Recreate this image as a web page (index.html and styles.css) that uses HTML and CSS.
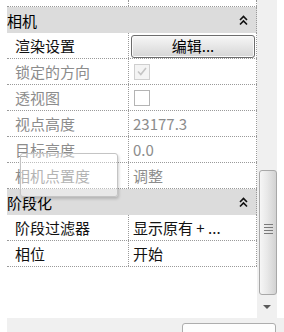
FILE: index.html
```html
<!DOCTYPE html>
<html lang="zh-CN">
<head>
    <link rel="stylesheet" href="styles.css">
</head>
<body>
    <div class="panel">
        <div class="main">
            <div class="grid">
                <div class="row stub">
                    <div class="name"></div>
                    <div class="value"></div>
                </div>

                <div class="group">
                    <span>相机</span>
                    <svg class="collapse" width="9" height="11" viewBox="0 0 9 11">
                        <path d="M1 5 L4.5 1.5 L8 5 M1 9.5 L4.5 6 L8 9.5" fill="none" stroke="#111" stroke-width="1.6"/>
                    </svg>
                </div>
                <div class="row">
                    <div class="name">渲染设置</div>
                    <div class="value"><button class="edit-btn">编辑...</button></div>
                </div>
                <div class="row muted">
                    <div class="name">锁定的方向</div>
                    <div class="value"><span class="check disabled">
                        <svg width="10" height="9" viewBox="0 0 10 9"><path d="M1 4.5 L3.8 7.5 L9 1" fill="none" stroke="#c4c4c4" stroke-width="1.6"/></svg>
                    </span></div>
                </div>
                <div class="row muted">
                    <div class="name">透视图</div>
                    <div class="value"><span class="check"></span></div>
                </div>
                <div class="row muted">
                    <div class="name">视点高度</div>
                    <div class="value">23177.3</div>
                </div>
                <div class="row muted">
                    <div class="name">目标高度</div>
                    <div class="value">0.0</div>
                </div>
                <div class="row muted">
                    <div class="name">相机点置度</div>
                    <div class="value">调整</div>
                </div>

                <div class="group">
                    <span>阶段化</span>
                    <svg class="collapse" width="9" height="11" viewBox="0 0 9 11">
                        <path d="M1 5 L4.5 1.5 L8 5 M1 9.5 L4.5 6 L8 9.5" fill="none" stroke="#111" stroke-width="1.6"/>
                    </svg>
                </div>
                <div class="row">
                    <div class="name">阶段过滤器</div>
                    <div class="value">显示原有 + ...</div>
                </div>
                <div class="row">
                    <div class="name">相位</div>
                    <div class="value">开始</div>
                </div>
            </div>

            <div class="scrollbar">
                <div class="track">
                    <div class="thumb"><span class="grip"></span></div>
                </div>
                <div class="arrow-down"></div>
            </div>
        </div>

        <div class="footer">
            <div class="footer-btn"></div>
        </div>

        <!-- drag ghost over the camera rows -->
        <div class="ghost"></div>
    </div>
</body>
</html>
```

FILE: styles.css
```css
body {
    margin: 0;
    background-color: white;
    font-family: "Noto Sans CJK SC", "Noto Sans", sans-serif;
    font-size: 15px;
    color: #111;
}

.panel {
    position: relative;
    width: 284px;
    height: 332px;
    overflow: hidden;
    background-color: white;
}

.main {
    display: flex;
    height: 318px;
}

.grid {
    width: 250px;
    padding-left: 7px;
}

.row {
    display: flex;
    height: 26px;
    box-sizing: border-box;
    border-bottom: 1px dotted #9a9a9a;
}

.row.stub {
    height: 7px;
}

.name {
    width: 121px;
    padding-left: 8px;
    box-sizing: border-box;
    display: flex;
    align-items: center;
    white-space: nowrap;
}

.value {
    flex: 1;
    display: flex;
    align-items: center;
    padding-left: 4px;
    border-left: 1px dotted #9a9a9a;
    border-right: 1px dotted #9a9a9a;
    white-space: nowrap;
}

.row.muted .name,
.row.muted .value {
    color: #8c8c8c;
}

.group {
    display: flex;
    justify-content: space-between;
    align-items: center;
    height: 26px;
    margin-top: 1px;
    padding-right: 8px;
    background-color: #dcdcdc;
    border-right: 1px dotted #9a9a9a;
    color: #000;
}

.group + .row {
    height: 26px;
}

.row + .group {
    margin-top: 0;
}

.collapse {
    display: block;
}

.edit-btn {
    width: 124px;
    height: 23px;
    margin: 1px 0 0 -2px;
    padding: 0;
    font-family: inherit;
    font-size: 15px;
    color: #000;
    border: 1px solid #6c6c6c;
    border-radius: 3px;
    background: linear-gradient(#f7f7f7, #e6e6e6 50%, #d6d6d6);
    box-shadow: inset 0 0 0 1px #fafafa;
    line-height: 20px;
}

.check {
    display: flex;
    align-items: center;
    justify-content: center;
    width: 14px;
    height: 14px;
    border: 1px solid #b4b4b4;
    background-color: white;
    margin-left: 1px;
}

.check.disabled {
    border-color: #cfcfcf;
    background-color: #f4f4f4;
}

.scrollbar {
    width: 20px;
    display: flex;
    flex-direction: column;
    background-color: #f0f0f0;
}

.track {
    flex: 1;
    padding-top: 170px;
}

.thumb {
    position: relative;
    height: 125px;
    margin-left: 2px;
    box-sizing: border-box;
    border: 1px solid #a8a8a8;
    border-radius: 3px;
    background: linear-gradient(to right, #f6f6f6, #e8e8e8 45%, #d2d2d2);
    display: flex;
    align-items: center;
    justify-content: center;
}

.grip {
    width: 9px;
    height: 10px;
    margin-top: -7px;
    background: repeating-linear-gradient(#7a7a7a 0 1px, transparent 1px 3px);
}

.arrow-down {
    width: 0;
    height: 0;
    margin: 0 0 9px 6px;
    border-left: 4px solid transparent;
    border-right: 4px solid transparent;
    border-top: 4px solid #5a5a5a;
}

.footer {
    height: 14px;
    margin-left: 7px;
    background-color: #f0f0f0;
    padding: 5px 0 0 175px;
    box-sizing: border-box;
}

.footer-btn {
    width: 94px;
    height: 20px;
    box-sizing: border-box;
    border: 1px solid #adadad;
    border-radius: 3px;
    background-color: #fdfdfd;
}

.ghost {
    position: absolute;
    left: 20px;
    top: 153px;
    width: 98px;
    height: 44px;
    box-sizing: border-box;
    border: 1px solid #c4c4c4;
    border-radius: 3px;
    background-color: rgba(255, 255, 255, 0.35);
    box-shadow: 1px 2px 3px rgba(0, 0, 0, 0.18);
}
```
